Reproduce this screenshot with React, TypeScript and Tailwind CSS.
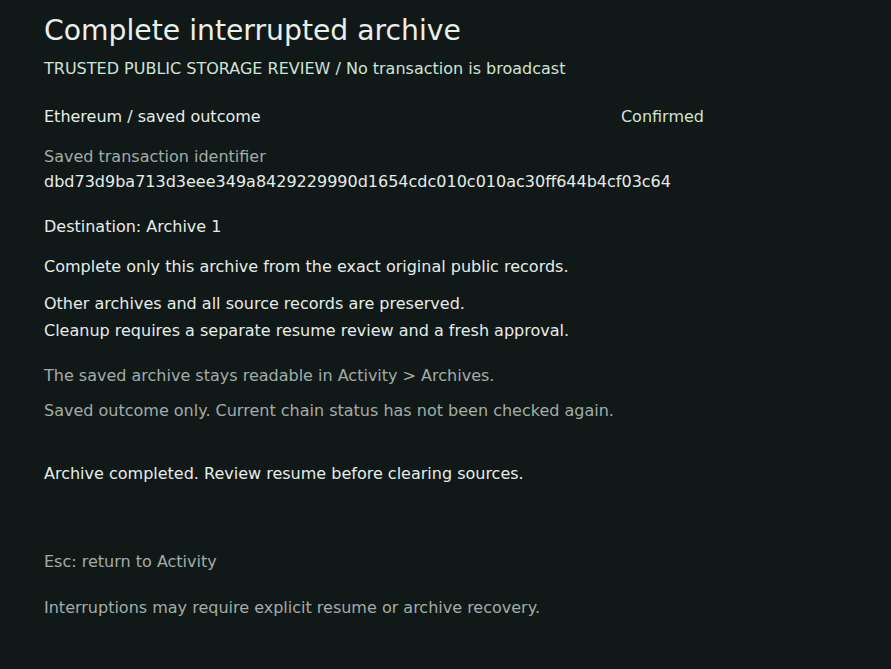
import React from "react";

export default function App() {
  return (
    <div className="min-h-[669px] w-full bg-[#101918] text-[#e6ece8] font-['DejaVu_Sans',sans-serif]">
      <div className="px-[44px] pt-[13px] w-[748px]">
        <h1 className="text-[28.25px] leading-[36px] text-[#e9efeb]">Complete interrupted archive</h1>
        <div className="mt-[10px] text-[16px] leading-[20px] text-[#cfe3d6]">
          TRUSTED PUBLIC STORAGE REVIEW / No transaction is broadcast
        </div>
        <div className="mt-[28px] flex justify-between text-[16px] leading-[20px]">
          <span>Ethereum / saved outcome</span>
          <span className="text-[#cfe3d6]">Confirmed</span>
        </div>
        <div className="mt-[20px] text-[16px] leading-[20px] text-[#a3aca8]">Saved transaction identifier</div>
        <div className="mt-[5px] text-[16px] leading-[20px]">dbd73d9ba713d3eee349a8429229990d1654cdc010c010ac30ff644b4cf03c64</div>
        <div className="mt-[25px] text-[16px] leading-[20px]">Destination: Archive 1</div>
        <div className="mt-[20px] text-[16px] leading-[20px]">Complete only this archive from the exact original public records.</div>
        <div className="mt-[13px] text-[16px] leading-[27px]">
          <div>Other archives and all source records are preserved.</div>
          <div>Cleanup requires a separate resume review and a fresh approval.</div>
        </div>
        <div className="mt-[22px] text-[16px] leading-[20px] text-[#a3aca8]">The saved archive stays readable in Activity &gt; Archives.</div>
        <div className="mt-[15px] text-[16px] leading-[20px] text-[#a3aca8]">Saved outcome only. Current chain status has not been checked again.</div>
        <div className="mt-[43px] text-[16px] leading-[20px]">Archive completed. Review resume before clearing sources.</div>
        <div className="mt-[68px] text-[16px] leading-[20px] text-[#a3aca8]">Esc: return to Activity</div>
        <div className="mt-[26px] text-[16px] leading-[20px] text-[#a3aca8]">Interruptions may require explicit resume or archive recovery.</div>
      </div>
    </div>
  );
}
